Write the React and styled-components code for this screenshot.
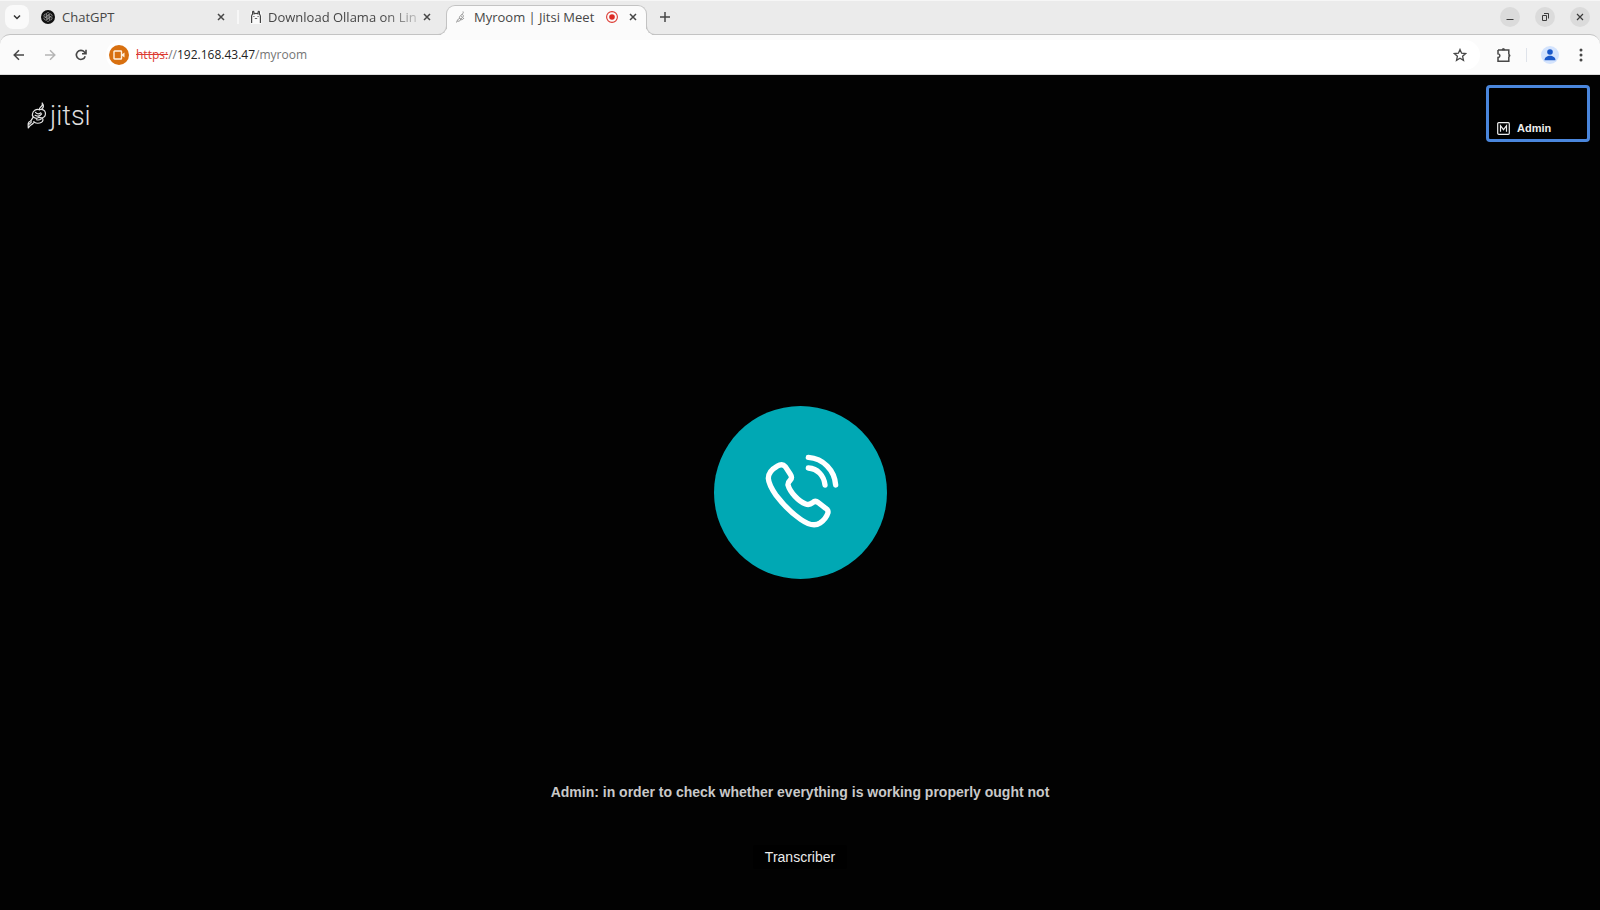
import React from "react";
import styled, { createGlobalStyle } from "styled-components";

const uiFont = '"Open Sans", "Noto Sans", sans-serif';
const meetFont = '"Liberation Sans", Arial, sans-serif';

const GlobalStyle = createGlobalStyle`
  *, *::before, *::after { box-sizing: border-box; }
  body { margin: 0; background: #020202; font-family: ${uiFont}; }
  button, input { font: inherit; color: inherit; }
  button { border: 0; padding: 0; background: none; cursor: pointer; }
`;

const Window = styled.div`
  display: flex;
  flex-direction: column;
  min-height: 100vh;
`;

const TabStrip = styled.header`
  display: flex;
  align-items: stretch;
  height: 34px;
  padding: 0 8px 2px 5px;
  background: #ebebeb;
  border-top: 1px solid #f6f6f6;
  color: #474747;
`;

const TabSearch = styled.button`
  display: grid;
  place-items: center;
  align-self: center;
  flex: none;
  width: 24px;
  height: 24px;
  border-radius: 8px;
  background: #fafafa;
  color: #333;
`;

const TabList = styled.nav`
  display: flex;
  min-width: 0;
`;

const Tab = styled.div`
  position: relative;
  display: flex;
  align-items: center;
  width: ${(p) => p.$width}px;
  padding: ${(p) => (p.$fade ? "0 14px 0 10px" : "0 11px 0 12px")};
  font-size: 13px;
  line-height: 20px;
  ${(p) =>
    p.$active &&
    `
    z-index: 1;
    height: 30px;
    margin: 4px 0 -3px;
    padding: 0 8px 7px 8px;
    background: #fbfbfb;
    border: 1px solid #c3c3c3;
    border-bottom: 0;
    border-radius: 9px 9px 0 0;
    &::before, &::after {
      content: "";
      position: absolute;
      bottom: 0;
      width: 9px;
      height: 9px;
      border-bottom: 1px solid #c3c3c3;
      pointer-events: none;
    }
    &::before {
      right: 100%;
      border-right: 1px solid #c3c3c3;
      border-bottom-right-radius: 9px;
      box-shadow: 3px 3px 0 #fbfbfb;
    }
    &::after {
      left: 100%;
      border-left: 1px solid #c3c3c3;
      border-bottom-left-radius: 9px;
      box-shadow: -3px 3px 0 #fbfbfb;
    }
  `}
`;

const TabTitle = styled.span`
  flex: 1;
  min-width: 0;
  margin-left: ${(p) => (p.$fade ? 5 : 7)}px;
  overflow: hidden;
  white-space: nowrap;
  ${(p) => p.$fade && "mask-image: linear-gradient(90deg, #000 75%, rgba(0, 0, 0, 0.15));"}
`;

const RecordingMark = styled.span`
  display: flex;
  margin-right: 10px;
`;

const TabDivider = styled.span`
  align-self: center;
  width: 2px;
  height: 14px;
  background: #f7f7f7;
`;

const IconButton = styled.button`
  display: grid;
  place-items: center;
  flex: none;
  width: ${(p) => p.$size || 24}px;
  height: ${(p) => p.$size || 24}px;
  color: ${(p) => p.$color || "#474747"};
`;

const NewTab = styled(IconButton)`
  align-self: center;
  margin-left: 6px;
`;

const WindowControls = styled.div`
  display: flex;
  align-items: center;
  gap: 15px;
  margin-left: auto;
  padding-right: 2px;
`;

const WindowButton = styled.button`
  display: grid;
  place-items: center;
  width: 20px;
  height: 20px;
  border-radius: 50%;
  background: #dbdbdb;
  color: #3c3c3c;
`;

const Backdrop = styled.div`
  background: #ebebeb;
`;

const Toolbar = styled.div`
  display: flex;
  align-items: center;
  height: 41px;
  padding: 0 7px 0 8px;
  background: #fbfbfb;
  border-top: 1px solid #c3c3c3;
  border-bottom: 1px solid #dcdcdc;
  border-radius: 10px 10px 0 0;
`;

const NavButtons = styled.div`
  display: flex;
  gap: 9px;
  padding-right: 14px;
`;

const Omnibox = styled.div`
  display: flex;
  align-items: center;
  flex: 1;
  gap: 7px;
  height: 30px;
  padding: 0 8px 0 3px;
  border-radius: 15px;
  background: #fff;
`;

const CameraBadge = styled.button`
  display: grid;
  place-items: center;
  flex: none;
  width: 20px;
  height: 20px;
  border-radius: 50%;
  background: #d87010;
`;

const Address = styled.a`
  flex: 1;
  font-size: 12px;
  line-height: 20px;
  color: #757575;
  text-decoration: none;
`;

const Scheme = styled.s`
  color: #dc3a32;
`;

const Host = styled.span`
  color: #222;
`;

const ToolbarActions = styled.div`
  display: flex;
  align-items: center;
  padding-left: 12px;
`;

const ActionDivider = styled.span`
  width: 1px;
  height: 14px;
  margin: 0 11px 0 10px;
  background: #dfe3ea;
`;

const MenuButton = styled(IconButton)`
  margin-left: 7px;
`;

const Meeting = styled.main`
  display: grid;
  grid-template-rows: 1fr auto 1fr;
  flex: 1;
  background: #020202;
  font-family: ${meetFont};
`;

const TopBar = styled.div`
  display: flex;
  align-items: flex-start;
  justify-content: space-between;
  padding: 10px 10px 0 27px;
`;

const Logo = styled.a`
  display: flex;
  align-items: center;
  gap: 3px;
  height: 30px;
  margin-top: 16px;
  color: #dedede;
  font: 300 27px/28px Roboto, sans-serif;
  text-decoration: none;
`;

const Thumbnail = styled.button`
  display: flex;
  align-items: flex-end;
  gap: 7px;
  width: 104px;
  height: 57px;
  padding: 0 0 4px 8px;
  border: 3px solid #4a86dc;
  border-radius: 4px;
  background: #000;
  color: #ededed;
  font: bold 11px/14px ${meetFont};
`;

const Avatar = styled.div`
  width: 173px;
  height: 173px;
  margin: 0 auto;
  border-radius: 50%;
  background: #00a8b4;
`;

const Captions = styled.div`
  display: flex;
  flex-direction: column;
  align-items: center;
  justify-content: flex-end;
  gap: 43px;
  padding-bottom: 41px;
  font-size: 14px;
  line-height: 20px;
`;

const Subtitle = styled.p`
  margin: 0;
  color: #c9c9c9;
  font-weight: bold;
`;

const SpeakerName = styled.p`
  margin: 0;
  padding: 2px 12px;
  border-radius: 3px;
  background: #000;
  color: #ececec;
`;

const Svg = ({ size = 16, box = "0 0 16 16", w = 1.5, children }) => (
  <svg width={size} height={size} viewBox={box} fill="none" stroke="currentColor" strokeWidth={w} aria-hidden="true">
    {children}
  </svg>
);

const CloseIcon = () => (
  <Svg size={8} box="0 0 8 8" w={1.5}><path d="M1 1l6 6M7 1L1 7" /></Svg>
);

const ChatGptIcon = () => (
  <Svg size={14} box="0 0 14 14" w={0.8}>
    <circle cx="7" cy="7" r="7" fill="#111" stroke="none" />
    <g stroke="#9a9a9a">
      {[0, 60, 120, 180, 240, 300].map((a) => (
        <path key={a} transform={`rotate(${a} 7 7)`} d="M5.3 6V4.2C5.3 2.5 7.6 2 8.5 3.4M5.3 4.6l3.2 1.9" />
      ))}
    </g>
  </Svg>
);

const OllamaIcon = () => (
  <Svg size={14} box="0 0 14 14" w={1.2}>
    <rect x="1.500" y="1" width="11" height="13" fill="#fafafa" stroke="none" />
    <path stroke="#444" d="M2.600 13V6.500C2.600 5 3 4.500 3.600 4.200V2c0-1 1.200-1 1.300 0l.3 1.800c1-.5 2.600-.5 3.600 0L9.100 2c.1-1 1.300-1 1.300 0v2.200c.6.300 1 .8 1 2.300V13" />
    <path stroke="#555" strokeWidth=".9" d="M4.300 6.500h1.200M8.500 6.500h1.200M5.800 8.500h2.400" />
  </Svg>
);

const JitsiTabIcon = () => (
  <Svg size={12} box="0 0 12 12" w={0.9}>
    <g stroke="#8c8c8c">
      <path d="M8 .5c.8 1.200-.4 2-.9 2.900-1.800 1-3 2.500-2.700 4.100 1.800.6 3.900-.6 3.900-2.600 0-1-.5-1.300-1.200-1.500M4.400 7.500C2.800 8 2.200 9.500 1.500 11.500M5 8.300c1.500 1 3 .2 4-1.300M2.500 10.500l3-1" />
      <path d="M6.200 5.200l1 1.200" />
    </g>
  </Svg>
);

const RecordIcon = () => (
  <Svg size={12} box="0 0 12 12" w={1.1}>
    <circle cx="6" cy="6" r="5.400" stroke="#dc3a32" />
    <circle cx="6" cy="6" r="2.800" fill="#dc2b24" stroke="none" />
  </Svg>
);

const JitsiMark = () => (
  <svg width="20" height="28" viewBox="0 0 20 28" fill="none" stroke="#e2e2e2" strokeWidth="1.200" strokeLinecap="round" strokeLinejoin="round" aria-hidden="true">
    <path d="M15.200 1c.9 2-.2 3.200-1.700 4.300-.9.700-1.300 1.500-1.100 2.400M15.200 1c1.700 2.300 1.500 4.300-.2 5.700" />
    <path d="M12.400 7.700C9.200 6.500 5.700 9 5.400 12.200c-.2 1.700.8 3 2.200 3.600 1.400.8 3 .6 4.200-.4" />
    <path d="M12.400 7.700c2.900-.8 5.400.3 5.900 2.600.6 2.500-.6 4.700-3.200 5.700 1.500 1.200 1 3.300-.6 4.300-2.700 1.600-6.200 1.100-7.800-.7" />
    <path d="M8.500 10.400c1.300 1.500 3.600 1.800 5.300.4M8.100 13.300c2.400 1.400 5.100.6 6.500-1.500M11.800 15.400c1.200.4 2.200.5 3.300.6M9.500 17.700c1.700.6 3.400.2 4.700-.7" />
    <path d="M6.300 15.300c-1.500 1.200-1.400 2.900-3.200 3.900C.8 20 1 22 1.300 26c1-1.400 1.700-2.900 3.200-3.400 1.400-.5 1.600-1.800 3.200-2.300M2.300 22.200l2.200-2.300" />
  </svg>
);

const PhoneIcon = () => (
  <svg width="173" height="173" viewBox="40 33 519 519" fill="none" stroke="#fff" strokeWidth="16" strokeLinecap="round" strokeLinejoin="round" aria-hidden="true">
    <path d="M229 214C211 224 203 236 203 250C204 267 213 282 227 302C247 328 272 354 300 373C320 387 343 394 358 384C368 377 378 366 382 353C383 347 380 343 375 340L353 323C347 318 341 318 336 323C330 328 323 330 315 327C293 319 268 291 262 270C261 264 264 260 269 255C274 250 273 244 269 238L254 215C248 208 239 208 229 214Z" />
    <path d="M323 187C368 190 402 226 405 270M323 219C351 221 370 242 373 270" />
  </svg>
);

function BrowserTab({ icon, title, width, active, fade, recording }) {
  return (
    <Tab $width={width} $active={active} $fade={fade}>
      {icon}
      <TabTitle $fade={fade}>{title}</TabTitle>
      {recording && <RecordingMark><RecordIcon /></RecordingMark>}
      <IconButton $size={10} aria-label={`Close ${title}`}><CloseIcon /></IconButton>
    </Tab>
  );
}

export default function App() {
  return (
    <Window>
      <GlobalStyle />
      <TabStrip>
        <TabSearch aria-label="Search tabs">
          <Svg size={8} box="0 0 8 8" w={1.5}><path d="M1 2.500l3 3 3-3" /></Svg>
        </TabSearch>
        <TabList aria-label="Open tabs">
          <BrowserTab icon={<ChatGptIcon />} title="ChatGPT" width={208} />
          <TabDivider />
          <BrowserTab icon={<OllamaIcon />} title="Download Ollama on Lin" width={207} fade />
          <BrowserTab icon={<JitsiTabIcon />} title="Myroom | Jitsi Meet" width={201} active recording />
        </TabList>
        <NewTab aria-label="New tab">
          <Svg size={10} box="0 0 10 10" w={1.5}><path d="M5 0v10M0 5h10" /></Svg>
        </NewTab>
        <WindowControls>
          <WindowButton aria-label="Minimize"><Svg size={10} box="0 0 10 10" w={1}><path d="M1.500 7.500h7" /></Svg></WindowButton>
          <WindowButton aria-label="Restore"><Svg size={10} box="0 0 10 10" w={1}><path d="M2.500 3.500h4v5h-4zM4 1.500h4.500v5" /></Svg></WindowButton>
          <WindowButton aria-label="Close window"><Svg size={8} box="0 0 8 8" w={1.2}><path d="M1 1l6 6M7 1L1 7" /></Svg></WindowButton>
        </WindowControls>
      </TabStrip>
      <Backdrop>
        <Toolbar>
          <NavButtons>
            <IconButton $size={22} aria-label="Back"><Svg size={12} box="0 0 12 12" w={1.5}><path d="M11 6H1.500M6 1.200L1.200 6 6 10.800" /></Svg></IconButton>
            <IconButton $size={22} $color="#b5b5b5" aria-label="Forward"><Svg size={12} box="0 0 12 12" w={1.5}><path d="M1 6h9.500M6 1.200L10.800 6 6 10.800" /></Svg></IconButton>
            <IconButton $size={22} aria-label="Reload"><Svg size={12} box="0 0 12 12" w={1.6}><path d="M10.200 7.200A4.500 4.500 0 1 1 9.400 3.100L10.800 4.600M11 .8v4H7" /></Svg></IconButton>
          </NavButtons>
          <Omnibox>
            <CameraBadge aria-label="Camera in use">
              <svg width="12" height="10" viewBox="0 0 12 10" fill="none" stroke="#fff1df" strokeWidth="1.400" aria-hidden="true">
                <rect x="1" y="1" width="7.500" height="8" rx=".6" /><path d="M9 4.200L11.500 2.500v5L9 5.800z" fill="#fff1df" stroke="none" />
              </svg>
            </CameraBadge>
            <Address href="#myroom"><Scheme>https:</Scheme>//<Host>192.168.43.47</Host>/myroom</Address>
            <IconButton aria-label="Bookmark this page">
              <Svg size={14} box="0 0 14 14" w={1.3}><path d="M7 1.500l1.600 3.700 4 .4-3 2.700.9 4L7 10.200l-3.500 2.100.9-4-3-2.700 4-.4z" /></Svg>
            </IconButton>
          </Omnibox>
          <ToolbarActions>
            <IconButton aria-label="Extensions">
              <Svg size={16} box="0 0 16 16" w={1.5}><path d="M2 3h10.800v4.200M12.800 10v4.300H2v-3.800c2.500-.2 2.500-3.500 0-3.700V3" /><path d="M6 2.800c0-1.700 2.800-1.700 2.800 0zM12.800 7.200c1.700 0 1.700 2.800 0 2.800z" fill="currentColor" strokeWidth=".8" /></Svg>
            </IconButton>
            <ActionDivider />
            <IconButton aria-label="Profile">
              <svg width="18" height="18" viewBox="0 0 18 18" aria-hidden="true">
                <circle cx="9" cy="9" r="9" fill="#d3e3fd" /><circle cx="9" cy="6" r="2.800" fill="#1a58c9" /><path d="M3.500 14.200c0-6 11-6 11 0z" fill="#1a58c9" />
              </svg>
            </IconButton>
            <MenuButton aria-label="Browser menu">
              <svg width="4" height="14" viewBox="0 0 4 14" fill="currentColor" aria-hidden="true"><circle cx="2" cy="2" r="1.500" /><circle cx="2" cy="7" r="1.500" /><circle cx="2" cy="12" r="1.500" /></svg>
            </MenuButton>
          </ToolbarActions>
        </Toolbar>
      </Backdrop>
      <Meeting>
        <TopBar>
          <Logo href="#home"><JitsiMark />jitsi</Logo>
          <Thumbnail>
            <Svg size={13} box="0 0 13 13" w={1.2}><rect x=".7" y=".7" width="11.600" height="11.600" rx="1" /><path d="M3.500 9.800V3.700l3 4 3-4v6.100" /></Svg>
            <span>Admin</span>
          </Thumbnail>
        </TopBar>
        <Avatar><PhoneIcon /></Avatar>
        <Captions>
          <Subtitle>Admin: in order to check whether everything is working properly ought not</Subtitle>
          <SpeakerName>Transcriber</SpeakerName>
        </Captions>
      </Meeting>
    </Window>
  );
}
